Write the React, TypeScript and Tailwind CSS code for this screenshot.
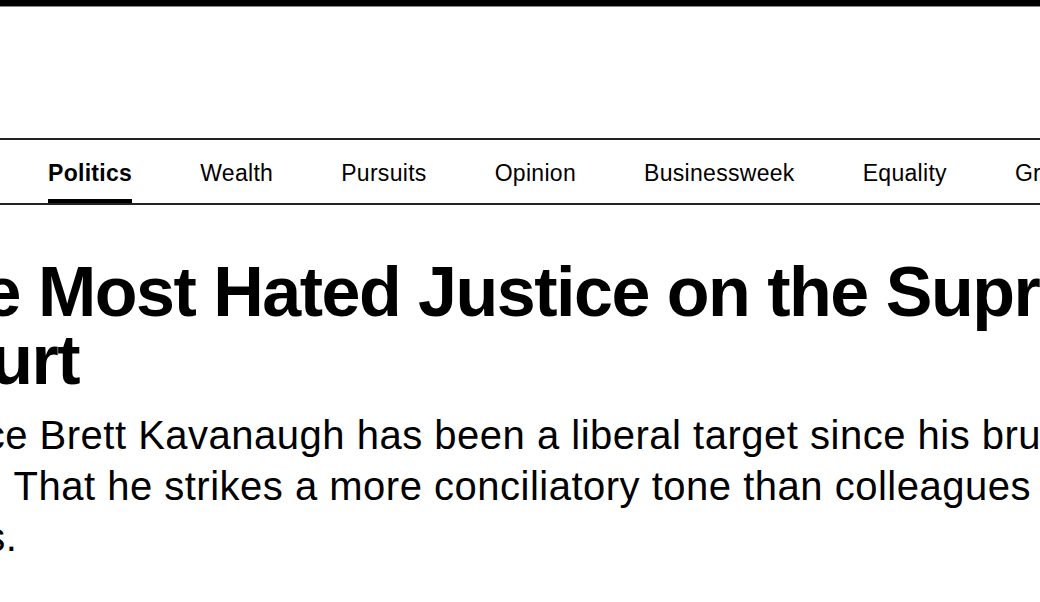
const navItems = ["Politics", "Wealth", "Pursuits", "Opinion", "Businessweek", "Equality", "Green", "CityLab", "Crypto", "More"];

export default function App() {
  return (
    <div className="w-full h-[602px] overflow-hidden bg-white text-black font-['Liberation_Sans',Arial,sans-serif]">
      <div className="h-[6px] bg-black" />
      <div className="h-px bg-[#8a8a8a]" />

      {/* section nav, Politics active */}
      <nav className="mt-[131px] h-[67px] border-t-2 border-b-2 border-[#222] flex gap-[68px] pl-[48px] whitespace-nowrap">
        {navItems.map((item, i) => (
          <a
            key={item}
            className={
              "block shrink-0 h-[63px] pt-[20px] text-[23px] leading-[26px] tracking-[0.3px] " +
              (i === 0 ? "font-bold border-b-4 border-black" : "")
            }
          >
            {item}
          </a>
        ))}
      </nav>

      <div className="ml-[-100px]">
        <h1 className="mt-[53px] w-[1300px] text-[70px] leading-[68px] font-bold tracking-[-1.5px]">
          The Most Hated Justice on the Supreme Court
        </h1>
        <p className="mt-[16px] w-[1500px] text-[40px] leading-[51px] tracking-[0.5px]">
          Justice Brett Kavanaugh has been a liberal target since his brutal confirmation in 2018. That he strikes a more conciliatory tone than colleagues hasn't won over critics.
        </p>
      </div>
    </div>
  );
}
